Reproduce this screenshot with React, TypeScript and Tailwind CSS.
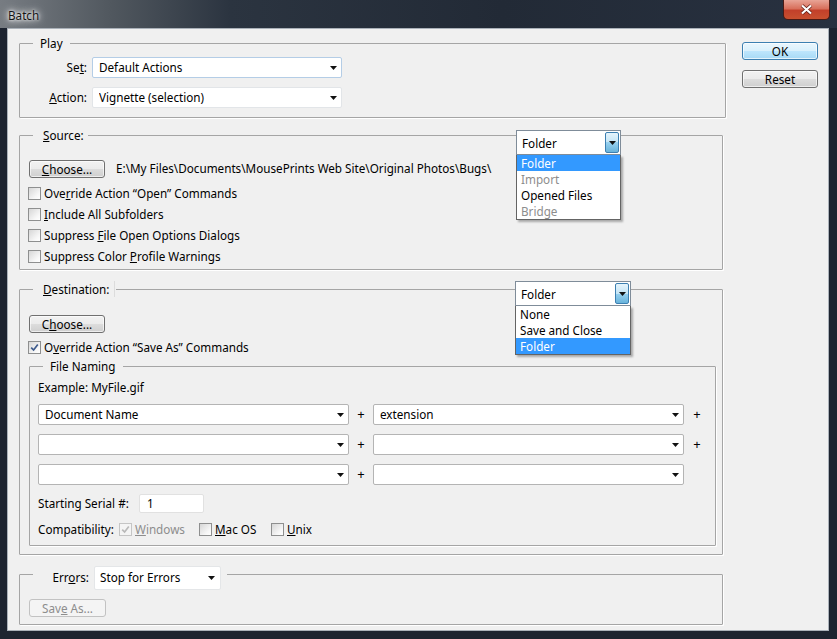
import type { ReactNode } from "react";

const Arrow = () => (
  <svg width="7" height="4" viewBox="0 0 7 4" className="shrink-0">
    <path d="M0 0h7L3.5 4z" fill="#111" />
  </svg>
);

function Select({
  value,
  className = "",
  border = "border-[#b4b4b4]",
}: {
  value?: string;
  className?: string;
  border?: string;
}) {
  return (
    <div
      className={`flex h-[21px] items-center rounded-[2px] border bg-white pl-[6px] pr-[4px] ${border} ${className}`}
    >
      <span className="flex-1 truncate leading-[19px]">{value}</span>
      <Arrow />
    </div>
  );
}

function Box({ checked = false, disabled = false }: { checked?: boolean; disabled?: boolean }) {
  return (
    <span
      className={`flex h-[13px] w-[13px] shrink-0 items-center justify-center border ${
        disabled
          ? "border-[#c5c5c5] bg-[#f4f4f4]"
          : "border-[#8e8f8f] bg-[linear-gradient(135deg,#d6d6d6,#f7f7f7_70%,#ffffff)]"
      }`}
    >
      {checked && (
        <svg width="9" height="9" viewBox="0 0 9 9">
          <path
            d="M1.2 4.6 L3.6 7 L7.8 1.6"
            fill="none"
            stroke={disabled ? "#b9b9b9" : "#3d5a8c"}
            strokeWidth="1.7"
          />
        </svg>
      )}
    </span>
  );
}

function Check({
  children,
  checked,
  disabled,
}: {
  children: ReactNode;
  checked?: boolean;
  disabled?: boolean;
}) {
  return (
    <div className="flex h-[21px] items-center">
      <Box checked={checked} disabled={disabled} />
      <span className={`ml-[3px] ${disabled ? "text-[#8d8d8d]" : ""}`}>{children}</span>
    </div>
  );
}

function Btn({
  children,
  className = "",
  primary = false,
  disabled = false,
}: {
  children: ReactNode;
  className?: string;
  primary?: boolean;
  disabled?: boolean;
}) {
  const look = primary
    ? "border-[#3c7fb1] bg-[linear-gradient(#eaf6fd,#d9f0fc_50%,#bee6fd_50%,#a7d9f5)] shadow-[inset_0_0_0_1px_#ffffffb0]"
    : disabled
      ? "border-[#c2c2c2] bg-[#f4f4f4] text-[#8d8d8d]"
      : "border-[#707070] bg-[linear-gradient(#f2f2f2,#ebebeb_50%,#dddddd_50%,#cfcfcf)] shadow-[inset_0_0_0_1px_#ffffffa0]";
  return (
    <div
      className={`flex h-[18px] items-center justify-center rounded-[3px] border leading-[16px] ${look} ${className}`}
    >
      {children}
    </div>
  );
}

function Combo({
  value,
  items,
  active,
  className,
}: {
  value: string;
  items: { label: string; gray?: boolean }[];
  active: number;
  className: string;
}) {
  return (
    <div className={`absolute ${className}`}>
      <div className="flex h-[25px] border border-[#7f8c99] bg-white">
        <span className="flex-1 pl-[5px] leading-[24px]">{value}</span>
        <div className="m-px flex w-[14px] items-center justify-center rounded-[2px] border border-[#3c7fb1] bg-[linear-gradient(#e5f4fc,#c4e5f6_50%,#98d1ef_50%,#68b3db)]">
          <Arrow />
        </div>
      </div>
      <div className="border border-t-0 border-[#646464] bg-white shadow-[2px_2px_2px_rgba(0,0,0,0.3)]">
        {items.map((it, i) => (
          <div
            key={it.label}
            className={`h-[16px] pl-[4px] leading-[16px] ${
              i === active ? "bg-[#3399ff] text-white" : it.gray ? "text-[#8d8d8d]" : ""
            }`}
          >
            {it.label}
          </div>
        ))}
      </div>
    </div>
  );
}

const groupCls =
  "border border-[#a5a5a5] shadow-[1px_1px_0_#ffffff] rounded-[1px]";

export default function App() {
  return (
    <div className="relative h-[639px] w-[837px] overflow-hidden bg-[#1d2430] font-['Noto_Sans',sans-serif] text-[11.7px] text-black">
      {/* title bar */}
      <div className="flex h-[28px] items-start bg-[linear-gradient(90deg,#777c82,#51585f_110px,#2b3440_230px,#222a36_60%,#283140)]">
        <span className="ml-[8px] mt-[7px] leading-[16px] text-[#151515] [text-shadow:0_0_6px_#fff,0_0_10px_#fff,0_0_3px_#fff]">
          Batch
        </span>
        <div className="ml-auto mr-[7px] flex h-[20px] w-[47px] items-center justify-center rounded-b-[5px] border border-t-0 border-[#4a1a14] bg-[linear-gradient(#e8a496,#d8705c_45%,#c2402a_55%,#c8502f)]">
          <svg width="13" height="11" viewBox="0 0 13 11">
            <path d="M2 1.5 L11 9.5 M11 1.5 L2 9.5" stroke="#5a1b12" strokeWidth="3.6" />
            <path d="M2 1.5 L11 9.5 M11 1.5 L2 9.5" stroke="#ffffff" strokeWidth="2.2" />
          </svg>
        </div>
      </div>

      {/* client */}
      <div className="ml-[7px] flex h-[603px] w-[822px] border border-[#aab1b9] bg-[#f0f0f0]">
        <div className="ml-[11px] flex w-[707px] flex-col pt-[6px]">
          {/* Play */}
          <fieldset className={`h-[83px] w-[707px] ${groupCls}`}>
            <legend className="ml-[13px] px-[7px] leading-[16px]">Play</legend>
            <div className="flex flex-col gap-[9px] pt-[6px]">
              <div className="flex items-center">
                <span className="w-[67px] text-right">
                  Se<u>t</u>:
                </span>
                <Select value="Default Actions" className="ml-[5px] w-[250px]" border="border-[#b4cde6]" />
              </div>
              <div className="flex items-center">
                <span className="w-[67px] text-right">
                  <u>A</u>ction:
                </span>
                <Select value="Vignette (selection)" className="ml-[5px] w-[250px]" border="border-[#e2e5e8]" />
              </div>
            </div>
          </fieldset>

          {/* Source */}
          <fieldset className={`mt-[9px] h-[143px] w-[704px] ${groupCls}`}>
            <legend className="ml-[13px] pl-[10px] pr-[4px] leading-[16px]">
              <u>S</u>ource:
            </legend>
            <div className="pl-[8px] pt-[17px]">
              <div className="flex items-center">
                <Btn className="ml-px w-[76px]">
                  <span>
                    <u>C</u>hoose...
                  </span>
                </Btn>
                <span className="ml-[11px]">
                  E:\My Files\Documents\MousePrints Web Site\Original Photos\Bugs\
                </span>
              </div>
              <div className="mt-[5px]">
                <Check>
                  Ove<u>r</u>ride Action “Open” Commands
                </Check>
                <Check>
                  <u>I</u>nclude All Subfolders
                </Check>
                <Check>
                  Suppress <u>F</u>ile Open Options Dialogs
                </Check>
                <Check>
                  Suppress Color <u>P</u>rofile Warnings
                </Check>
              </div>
            </div>
          </fieldset>

          {/* Destination */}
          <fieldset className={`mt-[11px] h-[274px] w-[704px] ${groupCls}`}>
            <legend className="ml-[13px] pl-[10px] leading-[16px]">
              <span className="inline-block border-r border-[#dcdcdc] pr-[5px]">
                <u>D</u>estination:
              </span>
              <span className="inline-block w-[1px]" />
            </legend>
            <div className="pl-[8px] pt-[18px]">
              <Btn className="ml-px w-[76px]">
                <span>
                  C<u>h</u>oose...
                </span>
              </Btn>
              <div className="mt-[4px]">
                <Check checked>
                  O<u>v</u>erride Action “Save As” Commands
                </Check>
              </div>
              <fieldset className={`ml-px h-[188px] w-[687px] ${groupCls}`}>
                <legend className="ml-[13px] px-[7px] leading-[16px]">File Naming</legend>
                <div className="pl-[8px] pt-[5px]">
                  <div className="leading-[16px]">Example: MyFile.gif</div>
                  <div className="mt-[9px] flex flex-col gap-[9px]">
                    {[
                      ["Document Name", "extension", true],
                      ["", "", true],
                      ["", "", false],
                    ].map(([a, b, plus], i) => (
                      <div key={i} className="flex items-center">
                        <Select value={a as string} className="w-[311px]" />
                        <span className="w-[24px] text-center text-[13px]">+</span>
                        <Select value={b as string} className="w-[311px]" />
                        {plus && <span className="w-[26px] text-center text-[13px]">+</span>}
                      </div>
                    ))}
                  </div>
                  <div className="mt-[9px] flex items-center">
                    <span className="w-[101px]">Starting Serial #:</span>
                    <div className="h-[19px] w-[65px] rounded-[2px] border border-[#e1e1e1] bg-white pl-[7px] leading-[17px]">
                      1
                    </div>
                  </div>
                  <div className="mt-[8px] flex h-[17px] items-center">
                    <span className="w-[81px]">Compatibility:</span>
                    <div className="flex w-[80px] items-center">
                      <Box checked disabled />
                      <span className="ml-[3px] text-[#8d8d8d]">
                        <u>W</u>indows
                      </span>
                    </div>
                    <div className="flex w-[72px] items-center">
                      <Box />
                      <span className="ml-[3px]">
                        <u>M</u>ac OS
                      </span>
                    </div>
                    <div className="flex items-center">
                      <Box />
                      <span className="ml-[3px]">
                        <u>U</u>nix
                      </span>
                    </div>
                  </div>
                </div>
              </fieldset>
            </div>
          </fieldset>

          {/* Errors */}
          <fieldset className={`mt-[11px] h-[59px] w-[704px] ${groupCls}`}>
            <legend className="ml-[13px] pr-[6px]">
              <div className="-mb-[8px] flex h-[24px] items-center">
                <span className="w-[56px] text-right">
                  Err<u>o</u>rs:
                </span>
                <div className="ml-[5px] flex h-[24px] w-[127px] items-center rounded-[2px] border border-[#e4e6e8] bg-white pl-[5px] pr-[5px]">
                  <span className="flex-1">Stop for Errors</span>
                  <Arrow />
                </div>
              </div>
            </legend>
            <div className="pl-[8px] pt-[17px]">
              <Btn disabled className="ml-px w-[77px]">
                <span>
                  Sav<u>e</u> As...
                </span>
              </Btn>
            </div>
          </fieldset>
        </div>

        {/* right buttons */}
        <div className="ml-[16px] flex flex-col gap-[10px] pt-[13px]">
          <Btn primary className="w-[76px]">
            OK
          </Btn>
          <Btn className="w-[76px]">Reset</Btn>
        </div>
      </div>

      {/* open dropdowns */}
      <Combo
        className="left-[516px] top-[130px] w-[105px]"
        value="Folder"
        active={0}
        items={[
          { label: "Folder" },
          { label: "Import", gray: true },
          { label: "Opened Files" },
          { label: "Bridge", gray: true },
        ]}
      />
      <Combo
        className="left-[515px] top-[281px] w-[116px]"
        value="Folder"
        active={2}
        items={[{ label: "None" }, { label: "Save and Close" }, { label: "Folder" }]}
      />
    </div>
  );
}
